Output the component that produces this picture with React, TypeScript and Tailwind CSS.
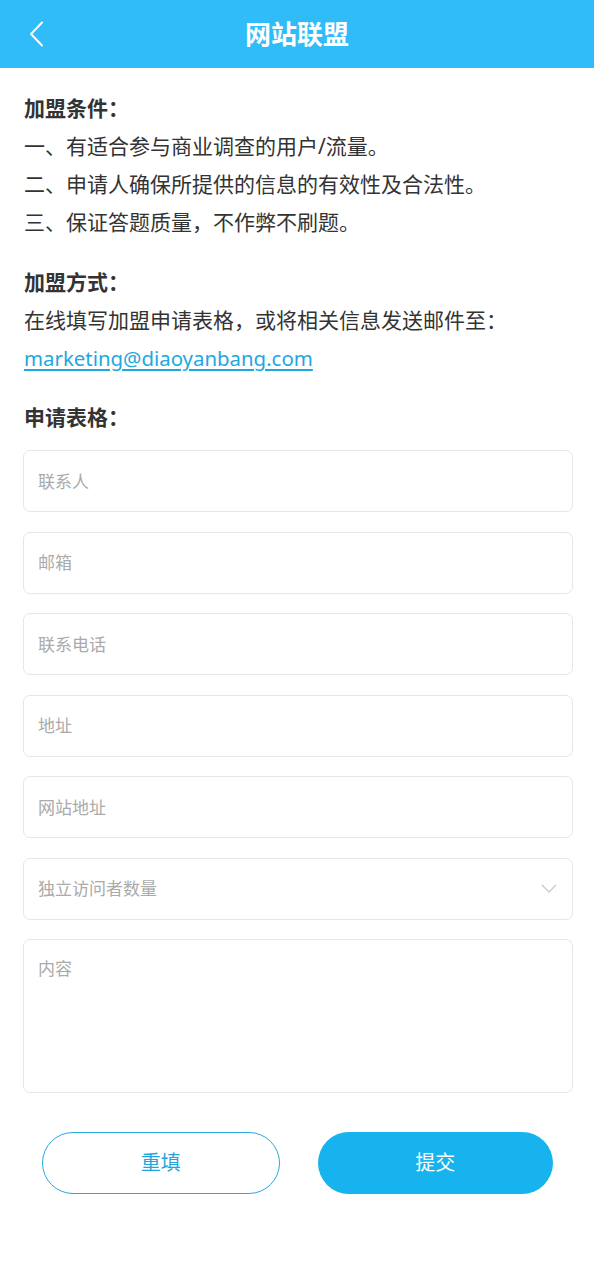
import React from "react";

const font = { fontFamily: '"Noto Sans", "Noto Sans CJK SC", sans-serif' };

const fields = ["联系人", "邮箱", "联系电话", "地址", "网站地址"];

const App: React.FC = () => {
  return (
    <div className="min-h-[1280px] w-full bg-white text-[#333]" style={font}>
      {/* Header */}
      <header className="relative flex h-[68px] items-center justify-center bg-[#30bcf9]">
        <button className="absolute left-[24px] top-[20px] flex h-[28px] w-[24px] items-center justify-center">
          <svg width="16" height="26" viewBox="0 0 16 26" fill="none">
            <path d="M14 1.5 L3 13 L14 24.5" stroke="white" strokeWidth="2" strokeLinecap="round" strokeLinejoin="round" />
          </svg>
        </button>
        <h1 className="text-[26px] font-bold text-white">网站联盟</h1>
      </header>

      <main className="pl-[23px] pr-[21px] pt-[21px]">
        {/* 加盟条件 */}
        <section className="pl-px text-[21px] leading-[38px]">
          <h2 className="font-bold">加盟条件：</h2>
          <p>一、有适合参与商业调查的用户/流量。</p>
          <p>二、申请人确保所提供的信息的有效性及合法性。</p>
          <p>三、保证答题质量，不作弊不刷题。</p>
        </section>

        {/* 加盟方式 */}
        <section className="mt-[22px] pl-px text-[21px] leading-[38px]">
          <h2 className="font-bold">加盟方式：</h2>
          <p>在线填写加盟申请表格，或将相关信息发送邮件至：</p>
          <a
            href="mailto:marketing@diaoyanbang.com"
            className="text-[20.4px] text-[#1ea8e0] underline underline-offset-[3px]"
          >
            marketing@diaoyanbang.com
          </a>
        </section>

        {/* 申请表格 */}
        <section className="mt-[21px]">
          <h2 className="pl-px text-[21px] font-bold leading-[38px]">申请表格：</h2>
          <form className="mt-[14px] flex flex-col gap-[19.5px]">
            {fields.map((f) => (
              <input
                key={f}
                placeholder={f}
                className="h-[62px] w-full rounded-[7px] border border-[#e6e6e6] px-[14px] text-[17px] text-[#333] outline-none placeholder:text-[#aaa]"
              />
            ))}
            <div className="relative">
              <select
                defaultValue=""
                className="h-[62px] w-full appearance-none rounded-[7px] border border-[#e6e6e6] bg-white px-[14px] text-[17px] text-[#aaa] outline-none"
              >
                <option value="" disabled hidden>
                  独立访问者数量
                </option>
                <option>1000以下</option>
                <option>1000-10000</option>
                <option>10000以上</option>
              </select>
              <svg
                className="pointer-events-none absolute right-[16px] top-[26px]"
                width="16"
                height="9"
                viewBox="0 0 16 9"
                fill="none"
              >
                <path d="M1 1 L8 8 L15 1" stroke="#c8c8c8" strokeWidth="1.3" />
              </svg>
            </div>
            <textarea
              placeholder="内容"
              className="h-[154px] w-full resize-none rounded-[7px] border border-[#e6e6e6] px-[14px] py-[16px] text-[17px] text-[#333] outline-none placeholder:text-[#aaa]"
            />
          </form>
        </section>

        {/* Buttons */}
        <div className="mt-[39px] flex gap-[38px] pl-[19px] pr-[20px]">
          <button className="h-[62px] flex-1 rounded-full border border-[#2aa8dc] bg-white text-[20px] text-[#1fa6de]">
            重填
          </button>
          <button className="h-[62px] flex-1 rounded-full bg-[#16b3ef] text-[20px] text-white">
            提交
          </button>
        </div>
      </main>
    </div>
  );
};

export default App;
